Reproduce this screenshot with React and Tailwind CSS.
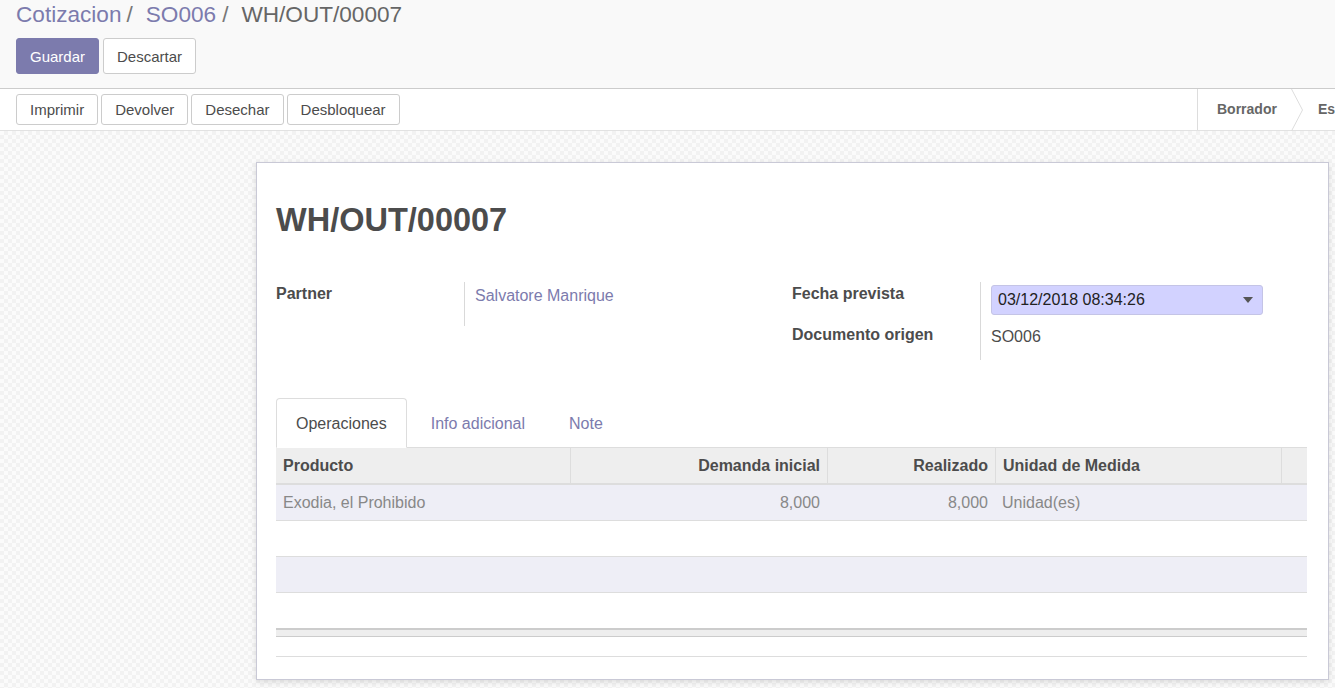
import React from 'react';

const Btn = ({ children, primary, className = '' }) => (
  <button
    className={
      'rounded-[3px] border px-[13px] text-[15px] leading-none ' +
      (primary
        ? 'bg-[#7c7bad] border-[#7c7bad] text-white'
        : 'bg-white border-[#cccccc] text-[#4c4c4c]') +
      ' ' +
      className
    }
  >
    {children}
  </button>
);

const cols = [
  { name: 'Producto', w: 'w-[294px]', align: 'text-left' },
  { name: 'Demanda inicial', w: 'w-[257px]', align: 'text-right' },
  { name: 'Realizado', w: 'w-[168px]', align: 'text-right' },
  { name: 'Unidad de Medida', w: 'w-[286px]', align: 'text-left' },
  { name: '', w: 'flex-1', align: 'text-left' },
];

const row = ['Exodia, el Prohibido', '8,000', '8,000', 'Unidad(es)', ''];

export default function App() {
  return (
    <div className="h-[688px] w-[1335px] overflow-hidden flex flex-col font-['Liberation_Sans',Arial,sans-serif] text-[16px]">
      {/* control panel */}
      <div className="h-[89px] bg-[#f9f9f9] border-b border-[#cccccc] px-4 shrink-0">
        <div className="h-[31px] flex items-center text-[22.6px] leading-none">
          <span className="text-[#7c7bad]">Cotizacion</span>
          <span className="text-[#777777] pl-[5px] pr-[13px]">/</span>
          <span className="text-[#7c7bad]">SO006</span>
          <span className="text-[#777777] pl-[6px] pr-[13px]">/</span>
          <span className="text-[#666666]">WH/OUT/00007</span>
        </div>
        <div className="flex gap-[4px] mt-[7px]">
          <Btn primary className="h-[36px] px-[13px]">Guardar</Btn>
          <Btn className="h-[36px] px-[12px]">Descartar</Btn>
        </div>
      </div>

      {/* status bar row */}
      <div className="h-[42px] bg-white border-b border-[#e2e2e2] flex items-center pl-4 shrink-0">
        <div className="flex gap-[3px]">
          <Btn className="h-[31px]">Imprimir</Btn>
          <Btn className="h-[31px]">Devolver</Btn>
          <Btn className="h-[31px]">Desechar</Btn>
          <Btn className="h-[31px]">Desbloquear</Btn>
        </div>
        <div className="ml-auto w-[138px] h-full flex items-center border-l border-[#dddddd] shrink-0">
          <span className="pl-[19px] pr-[14px] text-[14px] font-bold text-[#666666]">Borrador</span>
          <svg width="12" height="42" viewBox="0 0 12 42" className="shrink-0">
            <path d="M0.5 0 L11.5 21 L0.5 42" fill="none" stroke="#dddddd" strokeWidth="1" />
          </svg>
          <span className="pl-[15px] text-[14px] font-bold text-[#666666] whitespace-nowrap">Es</span>
        </div>
      </div>

      {/* content */}
      <div className="flex-1 bg-[repeating-conic-gradient(#f2f2f2_0_25%,#fbfbfb_0_50%)] bg-[length:8px_8px] pl-[256px] pt-[31px] overflow-hidden">
        <div className="w-[1073px] h-[518px] bg-white border border-[#c9c9d6] shadow-[0_2px_6px_rgba(0,0,0,0.12)] pl-[19px] pr-[21px] pt-[37px]">
          <h1 className="text-[32.5px] leading-[40px] font-bold text-[#4c4c4c]">WH/OUT/00007</h1>

          <div className="flex mt-[42px]">
            <div className="w-[516px] flex">
              <div className="w-[188px] font-bold text-[#4c4c4c] leading-[22px] pt-[1px]">Partner</div>
              <div className="border-l border-[#d9d9d9] h-[44px] pl-[10px] pt-[3px] text-[#7c7bad] leading-[22px]">
                Salvatore Manrique
              </div>
            </div>
            <div className="flex-1 flex">
              <div className="w-[188px] font-bold text-[#4c4c4c] leading-[22px] pt-[1px]">
                <div className="h-[41px]">Fecha prevista</div>
                <div>Documento origen</div>
              </div>
              <div className="border-l border-[#d9d9d9] h-[78px] pl-[10px] pt-[3px]">
                <div className="w-[272px] h-[30px] bg-[#d2d2ff] border border-[#c4c4e6] rounded-[3px] flex items-center pl-[6px] pr-[9px] text-[#222222]">
                  <span>03/12/2018 08:34:26</span>
                  <svg width="10" height="6" viewBox="0 0 10 6" className="ml-auto">
                    <path d="M0 0 L10 0 L5 6 Z" fill="#555555" />
                  </svg>
                </div>
                <div className="mt-[11px] text-[#4c4c4c] leading-[22px]">SO006</div>
              </div>
            </div>
          </div>

          {/* tabs */}
          <div className="mt-[39px] flex items-end h-[49px] border-b border-[#dddddd]">
            <div className="h-[50px] -mb-px px-[19px] pt-[2px] flex items-center bg-white border border-[#dddddd] border-b-white rounded-t-[4px] text-[#4c4c4c]">
              Operaciones
            </div>
            <div className="h-[49px] pt-[2px] px-[21px] ml-[3px] flex items-center text-[#7c7bad]">Info adicional</div>
            <div className="h-[49px] pt-[2px] pl-[23px] pr-[21px] flex items-center text-[#7c7bad]">Note</div>
          </div>

          {/* table */}
          <div className="text-[16px]">
            <div className="flex h-[37px] bg-[#eeeeee] border-b-2 border-[#dddddd] font-bold text-[#4c4c4c]">
              {cols.map((c, i) => (
                <div
                  key={i}
                  className={
                    c.w + ' ' + c.align + ' px-[7px] flex items-center ' +
                    (c.align === 'text-right' ? 'justify-end ' : '') +
                    (i > 0 ? 'border-l border-[#dddddd]' : '')
                  }
                >
                  {c.name}
                </div>
              ))}
            </div>
            <div className="flex h-[36px] bg-[#eeeef6] border-b border-[#dddddd] text-[#888888]">
              {cols.map((c, i) => (
                <div
                  key={i}
                  className={
                    c.w + ' px-[7px] flex items-center ' + (c.align === 'text-right' ? 'justify-end' : '')
                  }
                >
                  {row[i]}
                </div>
              ))}
            </div>
            <div className="h-[36px] bg-white border-b border-[#dddddd]" />
            <div className="h-[36px] bg-[#eeeef6] border-b border-[#dddddd]" />
            <div className="h-[35px] bg-white" />
            <div className="h-[9px] bg-[#eeeeee] border-t-2 border-b border-[#cccccc]" />
            <div className="h-[19px]" />
            <div className="border-t border-[#dddddd]" />
          </div>
        </div>
      </div>
    </div>
  );
}
